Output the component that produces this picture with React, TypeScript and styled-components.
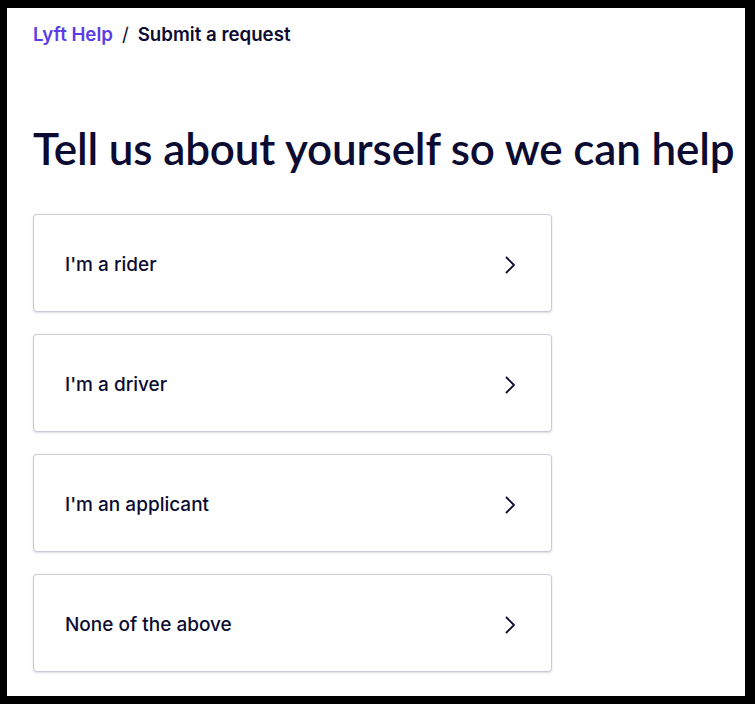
import React from 'react';
import styled, { createGlobalStyle } from 'styled-components';

const GlobalStyle = createGlobalStyle`
  html, body {
    margin: 0;
    padding: 0;
    background: #ffffff;
  }
  * { box-sizing: border-box; }
`;

const Frame = styled.div`
  width: 755px;
  height: 704px;
  border-style: solid;
  border-color: #000000;
  border-width: 8px 10px 8px 7px;
  background: #ffffff;
  padding: 0 0 0 26px;
  overflow: hidden;
  font-family: Inter, "Liberation Sans", sans-serif;
  color: #0c0b31;
`;

const Breadcrumbs = styled.nav`
  display: flex;
  align-items: center;
  gap: 9px;
  height: 52px;
  font-size: 18.7px;
  font-weight: 600;
`;

const Crumb = styled.a<{ $current?: boolean }>`
  color: ${(p) => (p.$current ? '#0c0b31' : '#5a3de6')};
  text-decoration: none;
`;

const Sep = styled.span`
  color: #0c0b31;
  font-weight: 400;
`;

const Title = styled.h1`
  margin: 62px 0 0;
  font-family: Lato, "Liberation Sans", sans-serif;
  font-size: 44px;
  line-height: 52px;
  font-weight: 600;
  letter-spacing: -0.15px;
  white-space: nowrap;
  color: #0c0b31;
`;

const Options = styled.div`
  display: flex;
  flex-direction: column;
  gap: 22px;
  margin-top: 40px;
  width: 519px;
`;

const Option = styled.button`
  display: flex;
  align-items: center;
  justify-content: space-between;
  height: 98px;
  padding: 3px 35px 0 31px;
  background: #ffffff;
  border: 1.5px solid #cbcad8;
  border-radius: 4px;
  box-shadow: 0 1px 2px rgba(60, 58, 100, 0.18);
  font-family: inherit;
  font-size: 19px;
  font-weight: 500;
  color: #0c0b31;
  text-align: left;
  cursor: pointer;
`;

const Chevron = () => (
  <svg width="12" height="18" viewBox="0 0 12 18" fill="none">
    <polyline points="2.5,1.5 10,9 2.5,16.5" stroke="#0c0b31" strokeWidth="1.8" strokeLinecap="round" strokeLinejoin="round" />
  </svg>
);

const options = ["I'm a rider", "I'm a driver", "I'm an applicant", 'None of the above'];

export default function App() {
  return (
    <>
      <GlobalStyle />
      <Frame>
        <Breadcrumbs>
          <Crumb href="#">Lyft Help</Crumb>
          <Sep>/</Sep>
          <Crumb $current>Submit a request</Crumb>
        </Breadcrumbs>
        <Title>Tell us about yourself so we can help</Title>
        <Options>
          {options.map((label) => (
            <Option key={label}>
              <span>{label}</span>
              <Chevron />
            </Option>
          ))}
        </Options>
      </Frame>
    </>
  );
}
